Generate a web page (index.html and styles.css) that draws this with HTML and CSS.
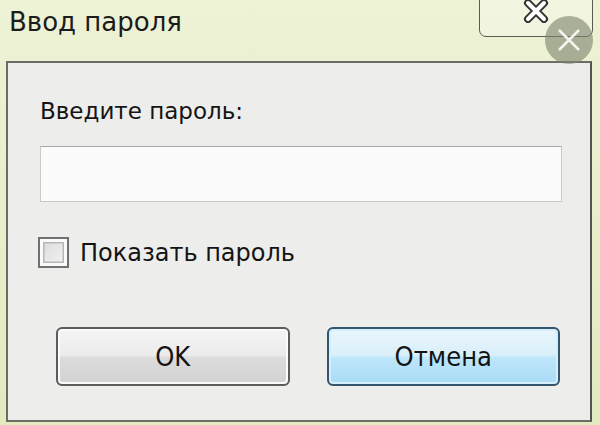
FILE: index.html
```html
<!DOCTYPE html>
<html lang="ru">
  <head>
    <meta charset="UTF-8" />
    <meta name="viewport" content="width=device-width, initial-scale=1.0" />
    <link rel="stylesheet" href="styles.css">
  </head>
  <body>
    <div class="window">
      <div class="titlebar">
        <div class="title">Ввод пароля</div>
        <div class="close-btn">
          <svg width="26" height="24" viewBox="0 0 26 24">
            <path d="M5 4 L21 20 M21 4 L5 20" stroke="#333" stroke-width="8" stroke-linecap="round" />
            <path d="M5 4 L21 20 M21 4 L5 20" stroke="#fff" stroke-width="4" stroke-linecap="round" />
          </svg>
        </div>
      </div>
      <div class="client">
        <div class="label">Введите пароль:</div>
        <div class="input"></div>
        <label class="check-row">
          <span class="checkbox"></span>
          <span>Показать пароль</span>
        </label>
        <div class="buttons">
          <div class="btn">OK</div>
          <div class="btn btn-default">Отмена</div>
        </div>
      </div>
    </div>

    <!-- overlay dismiss circle from the screenshot -->
    <div class="dismiss">
      <svg width="48" height="48" viewBox="0 0 48 48">
        <path d="M14 14 L34 34 M34 14 L14 34" stroke="#f4f4f0" stroke-width="2.5" />
      </svg>
    </div>
  </body>
</html>
```

FILE: styles.css
```css
* {
  margin: 0;
  padding: 0;
  box-sizing: border-box;
}
body {
  width: 600px;
  height: 425px;
  overflow: hidden;
  background: #e7eecb;
  font-family: "DejaVu Sans", Verdana, sans-serif;
  color: #141414;
  position: relative;
}
.window {
  display: flex;
  flex-direction: column;
  height: 425px;
  background: linear-gradient(180deg, #eef2d6 0%, #e2eac0 100%);
}
.titlebar {
  display: flex;
  justify-content: space-between;
  align-items: flex-start;
  height: 61px;
}
.title {
  font-size: 26px;
  padding: 7px 0 0 9px;
  color: #1c1c1c;
}
.close-btn {
  width: 114px;
  height: 43px;
  margin: -6px 7px 0 0;
  border: 1.5px solid #5a5a50;
  border-radius: 7px;
  background: rgba(255, 255, 255, 0.25);
  display: flex;
  justify-content: center;
  align-items: flex-start;
  padding-top: 4px;
}
.client {
  flex: 1;
  margin: 0 8px 3px 6px;
  border: 2px solid #6c6c64;
  border-right-color: #55554e;
  background: #ededec;
  padding: 34px 28px 0 32px;
  display: flex;
  flex-direction: column;
}
.label {
  font-size: 23px;
  line-height: 28px;
}
.input {
  margin-top: 21px;
  height: 56px;
  background: #fbfbfb;
  border: 1.5px solid #c9c9c6;
  border-top-color: #a9a9a6;
}
.check-row {
  display: flex;
  align-items: center;
  gap: 11px;
  margin-top: 35px;
  font-size: 24px;
  line-height: 28px;
  margin-left: -2px;
}
.checkbox {
  width: 31px;
  height: 31px;
  border: 2px solid #707070;
  background: #f4f4f4;
  box-shadow: inset 0 0 0 3px #fafafa, inset 0 0 0 4.5px #b8b8b8;
  background-image: linear-gradient(135deg, #d8d8d8, #f6f6f6);
}
.buttons {
  display: flex;
  gap: 37px;
  margin: 59px 0 0 16px;
  padding-right: 2px;
}
.btn {
  width: 234px;
  height: 59px;
  border: 2px solid #5c5c5c;
  border-radius: 6px;
  box-shadow: inset 0 0 0 2px #fbfbfb;
  background: linear-gradient(180deg, #f4f4f4 0%, #ebebeb 48%, #dcdcdc 52%, #d2d2d2 100%);
  display: flex;
  align-items: center;
  justify-content: center;
  font-size: 27px;
  font-family: "DejaVu Sans Condensed", "DejaVu Sans", sans-serif;
}
.btn-default {
  border-color: #33556e;
  box-shadow: inset 0 0 0 2px #d5eefa;
  background: linear-gradient(180deg, #eaf6fd 0%, #d9effa 48%, #bee6fb 52%, #a9dbf6 100%);
}
.dismiss {
  position: absolute;
  left: 545px;
  top: 16px;
  width: 48px;
  height: 48px;
  border-radius: 50%;
  background: rgba(125, 132, 110, 0.62);
}
```
